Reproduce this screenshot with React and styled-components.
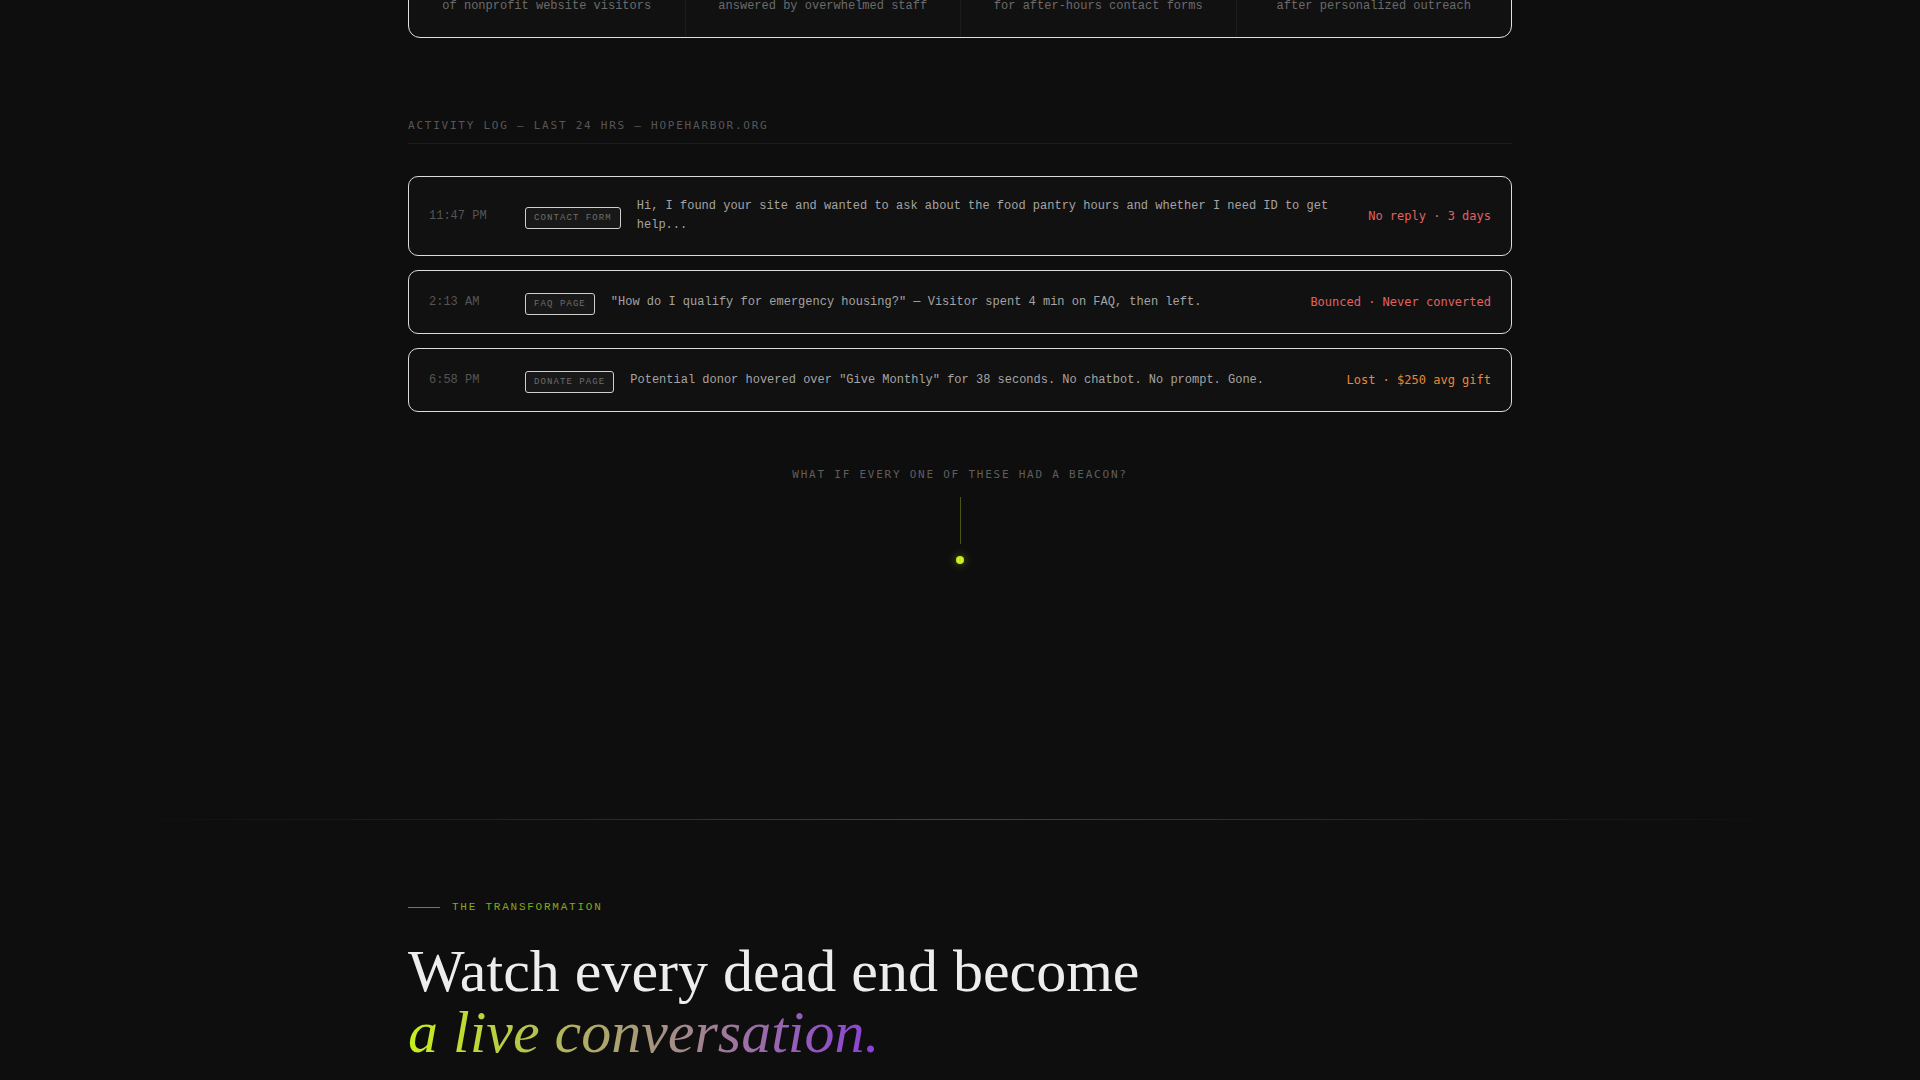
import React from 'react';
import styled, { createGlobalStyle } from 'styled-components';

const mono = "'Liberation Mono', 'Courier New', monospace";
const monoWide = "'DejaVu Sans Mono', monospace";
const serif = "'Liberation Serif', 'Times New Roman', serif";

const GlobalStyle = createGlobalStyle`
  html, body {
    margin: 0;
    padding: 0;
    background: #0e0e0e;
    overflow: hidden;
  }
  body {
    color: #e8e8e8;
    font-family: ${mono};
  }
  * { box-sizing: border-box; }
`;

const Page = styled.main`
  display: flex;
  flex-direction: column;
  min-height: 100vh;
`;

const Container = styled.div`
  width: 1104px;
  margin: 0 auto;
`;

/* stats strip (scrolled mostly out of view) */
const StatsCard = styled.div`
  margin-top: -84px;
  display: grid;
  grid-template-columns: repeat(4, 1fr);
  border: 1px solid #e0e0e0;
  border-radius: 12px;
  background: #111;
  overflow: hidden;
`;

const Stat = styled.div`
  padding: 28px 16px 22px;
  text-align: center;

  & + & {
    border-left: 1px solid #1c1c1c;
  }
`;

const StatValue = styled.div`
  font-family: ${serif};
  font-size: 38px;
  line-height: 44px;
  color: #f0f0f0;
`;

const StatCaption = styled.div`
  margin-top: 8px;
  font-size: 12px;
  line-height: 18px;
  color: #6b6b6b;
`;

/* activity log */
const LogSection = styled.section`
  padding-top: 79px;
`;

const LogHeader = styled.div`
  padding-bottom: 8px;
  border-bottom: 1px solid #1e1e1e;
  font-family: ${monoWide};
  font-size: 11px;
  line-height: 18px;
  letter-spacing: 0.16em;
  text-transform: uppercase;
  color: #575757;
`;

const LogList = styled.div`
  margin-top: 32px;
  display: flex;
  flex-direction: column;
  gap: 14px;
`;

const LogRow = styled.div`
  display: flex;
  align-items: center;
  gap: 16px;
  padding: 20px;
  border: 1px solid #dcdcdc;
  border-radius: 10px;
  background: #111;
`;

const Time = styled.span`
  flex: 0 0 80px;
  font-size: 12px;
  line-height: 19px;
  color: #555;
`;

const Tag = styled.span`
  flex-shrink: 0;
  transform: translateY(2px);
  padding: 3px 8px;
  border: 1px solid #cfcfcf;
  border-radius: 3px;
  background: #181818;
  font-size: 9px;
  line-height: 14px;
  letter-spacing: 0.12em;
  text-transform: uppercase;
  white-space: nowrap;
  color: #6e6e6e;
`;

const Message = styled.p`
  flex: 1;
  margin: 0;
  font-size: 12px;
  line-height: 19px;
  color: #a4a4a4;
`;

const Status = styled.span`
  flex-shrink: 0;
  white-space: nowrap;
  font-family: ${monoWide};
  font-size: 12px;
  line-height: 19px;
  color: ${(p) => p.$tone};
`;

/* beacon prompt */
const Beacon = styled.div`
  display: flex;
  flex-direction: column;
  align-items: center;
  padding: 54px 0 255px;
`;

const BeaconPrompt = styled.div`
  margin-bottom: 13px;
  font-family: ${monoWide};
  font-size: 11px;
  line-height: 18px;
  letter-spacing: 0.16em;
  text-transform: uppercase;
  color: #5e5e5e;
`;

const BeaconLine = styled.div`
  width: 1px;
  height: 47px;
  background: rgba(198, 240, 30, 0.32);
`;

const BeaconDot = styled.div`
  width: 8px;
  height: 8px;
  margin-top: 12px;
  border-radius: 50%;
  background: #c6f01e;
  box-shadow: 0 0 8px rgba(198, 240, 30, 0.45);
`;

const GlowDivider = styled.div`
  height: 1px;
  background: linear-gradient(
    90deg,
    transparent 6%,
    rgba(255, 255, 255, 0.07) 24%,
    rgba(150, 70, 200, 0.55) 50%,
    rgba(255, 255, 255, 0.07) 76%,
    transparent 94%
  );
`;

/* transformation intro */
const Transformation = styled.section`
  padding: 78px 0 120px;
`;

const Eyebrow = styled.div`
  display: flex;
  align-items: center;
  gap: 12px;
  font-size: 11px;
  line-height: 18px;
  letter-spacing: 0.16em;
  text-transform: uppercase;
  color: #86a81c;
`;

const EyebrowRule = styled.span`
  width: 32px;
  height: 1px;
  background: #6f8a1a;
`;

const Heading = styled.h2`
  margin: 25px 0 0;
  font-family: ${serif};
  font-weight: 400;
  font-size: 60px;
  line-height: 61px;
  color: #ededed;
`;

const Accent = styled.em`
  font-style: italic;
  background: linear-gradient(90deg, #c6f01e, #8b3fd8);
  -webkit-background-clip: text;
  background-clip: text;
  color: transparent;
`;

const stats = [
  { value: '67%', caption: 'of nonprofit website visitors' },
  { value: '48 hrs', caption: 'answered by overwhelmed staff' },
  { value: '0', caption: 'for after-hours contact forms' },
  { value: '5×', caption: 'after personalized outreach' },
];

const RED = '#e06262';
const ORANGE = '#e8873a';

const logs = [
  {
    time: '11:47 PM',
    source: 'Contact form',
    text: 'Hi, I found your site and wanted to ask about the food pantry hours and whether I need ID to get help...',
    status: 'No reply · 3 days',
    tone: RED,
  },
  {
    time: '2:13 AM',
    source: 'FAQ page',
    text: '"How do I qualify for emergency housing?" — Visitor spent 4 min on FAQ, then left.',
    status: 'Bounced · Never converted',
    tone: RED,
  },
  {
    time: '6:58 PM',
    source: 'Donate page',
    text: 'Potential donor hovered over "Give Monthly" for 38 seconds. No chatbot. No prompt. Gone.',
    status: 'Lost · $250 avg gift',
    tone: ORANGE,
  },
];

const App = () => {
  return (
    <>
      <GlobalStyle />
      <Page>
        <Container>
          <StatsCard>
            {stats.map((s) => (
              <Stat key={s.caption}>
                <StatValue>{s.value}</StatValue>
                <StatCaption>{s.caption}</StatCaption>
              </Stat>
            ))}
          </StatsCard>

          <LogSection>
            <LogHeader>Activity log — last 24 hrs — hopeharbor.org</LogHeader>
            <LogList>
              {logs.map((log) => (
                <LogRow key={log.time}>
                  <Time>{log.time}</Time>
                  <Tag>{log.source}</Tag>
                  <Message>{log.text}</Message>
                  <Status $tone={log.tone}>{log.status}</Status>
                </LogRow>
              ))}
            </LogList>
          </LogSection>

          <Beacon>
            <BeaconPrompt>What if every one of these had a beacon?</BeaconPrompt>
            <BeaconLine />
            <BeaconDot />
          </Beacon>
        </Container>

        <GlowDivider />

        <Container>
          <Transformation>
            <Eyebrow>
              <EyebrowRule />
              The transformation
            </Eyebrow>
            <Heading>
              Watch every dead end become
              <br />
              <Accent>a live conversation.</Accent>
            </Heading>
          </Transformation>
        </Container>
      </Page>
    </>
  );
};

export default App;
